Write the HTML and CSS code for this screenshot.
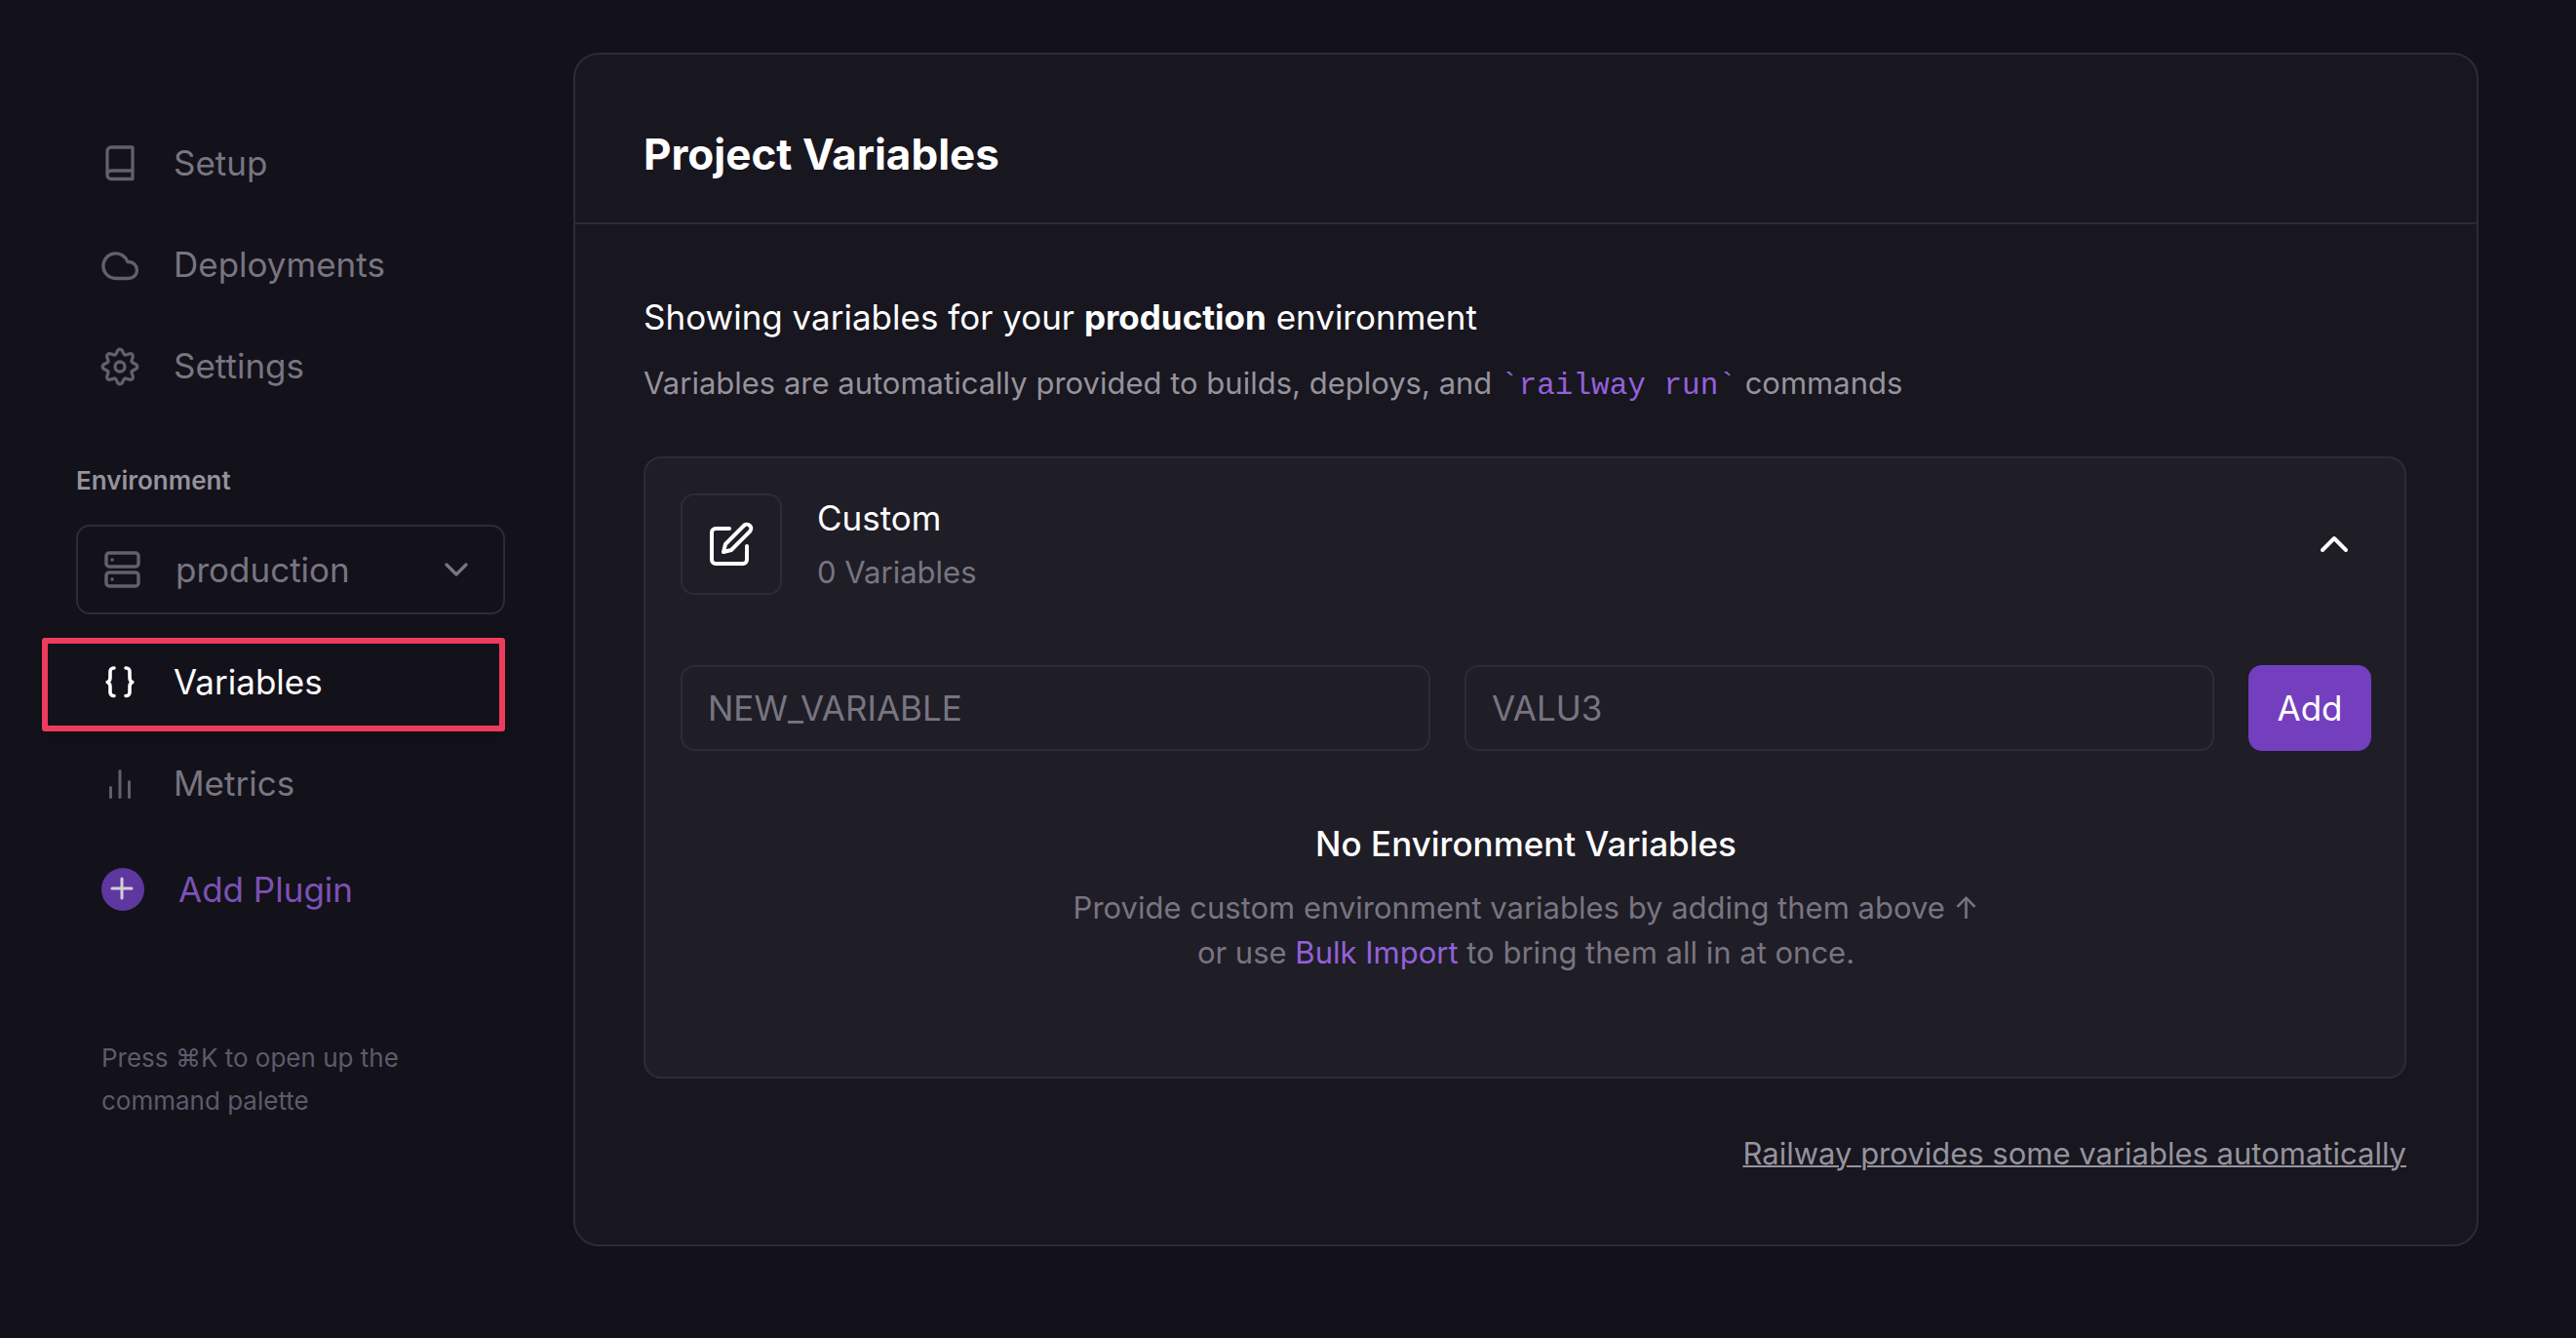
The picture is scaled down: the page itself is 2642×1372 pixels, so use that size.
FILE: index.html
```html
<!DOCTYPE html>
<html lang="en">
<head>
<meta charset="utf-8">
<meta name="viewport" content="width=device-width, initial-scale=1">
<title>Project Variables</title>
<link rel="stylesheet" href="styles.css">
</head>
<body>
<div class="layout">
  <aside class="sidebar">
    <nav class="nav">
      <a class="nav-item" href="#setup">
        <svg class="nav-icon" viewBox="0 0 38 40" stroke-width="3.300" aria-hidden="true"><path d="M32 4H10a4 4 0 0 0-4 4v24.500a4 4 0 0 0 4 4h22zM32 28H10a4 4 0 0 0-4 4"/></svg>
        Setup
      </a>
      <a class="nav-item" href="#deployments">
        <svg class="nav-icon" viewBox="0 0 38 40" stroke-width="3.300" aria-hidden="true"><path d="M28 17.500h-1.200A12.800 12.800 0 1 0 14.500 34.500H28a8.500 8.500 0 0 0 0-17z"/></svg>
        Deployments
      </a>
      <a class="nav-item" href="#settings">
        <svg class="nav-icon" viewBox="0 0 38 40" stroke-width="3.300" aria-hidden="true">
          <defs><path id="tooth" d="M-5.050-12.200C-2.500-13.300-3.600-17.800 0-17.800S2.500-13.300 5.050-12.200"/></defs>
          <g transform="translate(19 21)">
            <use href="#tooth"/><use href="#tooth" transform="rotate(45)"/><use href="#tooth" transform="rotate(90)"/><use href="#tooth" transform="rotate(135)"/><use href="#tooth" transform="rotate(180)"/><use href="#tooth" transform="rotate(225)"/><use href="#tooth" transform="rotate(270)"/><use href="#tooth" transform="rotate(315)"/>
            <circle r="5"/>
          </g>
        </svg>
        Settings
      </a>
    </nav>

    <label class="env-label" for="environment">Environment</label>
    <div class="env-select">
      <svg class="env-icon" viewBox="0 0 38 40" stroke-width="3.500" aria-hidden="true"><rect x="3" y="3" width="33" height="14" rx="3"/><rect x="3" y="23" width="33" height="14" rx="3"/><path d="M9 10h.1M9 30h.1"/></svg>
      <select id="environment"><option>production</option></select>
      <svg class="env-chevron" viewBox="0 0 24 16" stroke-width="3.300" aria-hidden="true"><path d="M2 3l10 10L22 3"/></svg>
    </div>

    <nav class="nav nav-env">
      <a class="nav-item active" href="#variables" aria-current="page">
        <svg class="nav-icon" viewBox="0 0 38 40" stroke-width="3.600" aria-hidden="true"><path d="M13 6h-.5a3.500 3.500 0 0 0-3.500 3.500v6c0 2-1 4.500-2.800 5 1.800.5 2.800 2.500 2.800 4.500V31a3.500 3.500 0 0 0 3.500 3.500H13M25 6h.5a3.500 3.500 0 0 1 3.500 3.500v6c0 2 1 4.500 2.800 5-1.800.5-2.800 2.500-2.800 4.500V31a3.500 3.500 0 0 1-3.500 3.500H25"/></svg>
        Variables
      </a>
      <a class="nav-item" href="#metrics">
        <svg class="nav-icon" viewBox="0 0 38 40" stroke-width="3" aria-hidden="true"><path d="M9.500 24.500v10M19 7.500v27M28.500 18.500v16"/></svg>
        Metrics
      </a>
    </nav>
    <a class="nav-item add-plugin" href="#add-plugin">
      <svg class="plus-icon" viewBox="0 0 44 44" stroke-width="3" aria-hidden="true"><circle cx="22" cy="22" r="22"/><path d="M21 11v20M11 21h20"/></svg>
      Add Plugin
    </a>
    <p class="hint">Press ⌘K to open up the command palette</p>
  </aside>

  <main class="card">
    <header class="card-header"><h1>Project Variables</h1></header>
    <div class="card-body">
      <h2 class="lead">Showing variables for your <strong>production</strong> environment</h2>
      <p class="sub">Variables are automatically provided to builds, deploys, and <code>`railway run`</code> commands</p>

      <section class="group">
        <div class="group-head">
          <div class="group-icon">
            <svg viewBox="0 0 24 24" stroke-width="2" aria-hidden="true"><path d="M11 4H4a2 2 0 0 0-2 2v14a2 2 0 0 0 2 2h14a2 2 0 0 0 2-2v-7"/><path d="M18.500 2.500a2.121 2.121 0 0 1 3 3L12 15l-4 1 1-4 9.500-9.500z"/></svg>
          </div>
          <div class="group-text">
            <h3>Custom</h3>
            <p>0 Variables</p>
          </div>
          <button class="collapse" type="button" aria-label="Collapse Custom">
            <svg viewBox="0 0 24 24" stroke-width="2" aria-hidden="true"><path d="M18 15l-6-6-6 6"/></svg>
          </button>
        </div>
        <form class="new-variable">
          <input type="text" placeholder="NEW_VARIABLE" aria-label="Variable name">
          <input type="text" placeholder="VALU3" aria-label="Variable value">
          <button class="add" type="button">Add</button>
        </form>
        <div class="empty">
          <h3>No Environment Variables</h3>
          <p>Provide custom environment variables by adding them above ↑<br>or use <a href="#bulk-import">Bulk Import</a> to bring them all in at once.</p>
        </div>
      </section>

      <a class="docs-link" href="#docs">Railway provides some variables automatically</a>
    </div>
  </main>
</div>
</body>
</html>
```
FILE: styles.css
```css
:root {
  --bg: #13111a;
  --card: #18161f;
  --group: #1f1d26;
  --line: #2d2b35;
  --text: #ffffff;
  --text-soft: #95939d;
  --text-muted: #787581;
  --text-dim: #5d5b69;
  --purple: #9461dc;
  --purple-fill: #733fbf;
}

* { box-sizing: border-box; }

body {
  margin: 0;
  min-height: 100vh;
  background: var(--bg);
  color: var(--text);
  font-family: Inter, "Liberation Sans", "DejaVu Sans", sans-serif;
  font-size: 35px;
  line-height: 48px;
}

h1, h2, h3, p { margin: 0; font-weight: 400; font-size: inherit; }
a { color: inherit; text-decoration: none; }
svg { display: block; flex: none; fill: none; stroke: currentColor; stroke-linecap: round; stroke-linejoin: round; }
button, input, select { font: inherit; color: inherit; }

.layout {
  display: grid;
  grid-template-columns: 440px minmax(0, 1fr);
  gap: 70px;
  align-items: start;
  padding: 54px 100px 54px 78px;
}

/* Sidebar */
.sidebar { padding-top: 61px; }

.nav-item {
  position: relative;
  display: flex;
  align-items: center;
  gap: 36px;
  height: 104px;
  padding-left: 26px;
  color: var(--text-muted);
}
.nav-icon { width: 38px; height: 40px; overflow: visible; color: #62606e; }

.env-label {
  display: block;
  margin-top: 46px;
  font-size: 26px;
  font-weight: 600;
  line-height: 40px;
  color: var(--text-soft);
}
.env-select {
  display: flex;
  align-items: center;
  height: 92px;
  margin-top: 25px;
  padding: 0 36px 0 26px;
  border: 2px solid var(--line);
  border-radius: 14px;
  color: var(--text-muted);
}
.env-icon { width: 38px; height: 40px; color: #62606e; }
.env-select select {
  flex: 1;
  min-width: 0;
  height: 88px;
  padding: 0 0 0 36px;
  border: 0;
  background: transparent;
  appearance: none;
}
.env-chevron { width: 24px; height: 16px; }

.nav-env { margin-top: 17px; }
.active, .active .nav-icon { color: var(--text); }
.active::after {
  content: "";
  position: absolute;
  inset: 7px 0 1px -35px;
  border: 6px solid #ef3c5d;
  border-radius: 3px;
  box-shadow: 0 4px 12px rgba(16, 16, 18, .5);
}

.add-plugin { gap: 35px; margin-top: 5px; color: #7c51b5; }
.plus-icon { width: 44px; height: 44px; stroke: #d2d0d4; }
.plus-icon circle { fill: #5f37a0; stroke: none; }

.hint {
  margin-top: 99px;
  padding: 0 26px;
  font-size: 26px;
  line-height: 44px;
  color: var(--text-dim);
}

/* Card */
.card {
  background: var(--card);
  border: 2px solid var(--line);
  border-radius: 26px;
}
.card-header { padding: 74px 70px 42px; border-bottom: 2px solid var(--line); }
.card-header h1 { font-size: 44px; line-height: 56px; font-weight: 700; }
.card-body { display: flex; flex-direction: column; padding: 71px 72px 71px 70px; }

.lead strong { font-weight: 700; }
.sub { margin-top: 22px; font-size: 31px; line-height: 44px; color: var(--text-soft); }
.sub code { font-family: "Liberation Mono", monospace; font-size: 31px; line-height: 1; color: var(--purple); }

.group {
  margin-top: 53px;
  padding: 36px 34px 104px 36px;
  background: var(--group);
  border: 2px solid var(--line);
  border-radius: 18px;
}
.group-head { display: flex; align-items: center; gap: 36px; }
.group-icon {
  display: grid;
  place-items: center;
  width: 104px;
  height: 104px;
  border: 2px solid var(--line);
  border-radius: 14px;
}
.group-icon svg, .collapse svg { width: 48px; height: 48px; }
.group-text { flex: 1; }
.group-text p { margin-top: 10px; font-size: 31px; line-height: 44px; color: var(--text-muted); }
.collapse { padding: 0 14px; border: 0; background: none; }

.new-variable { display: flex; gap: 35px; margin-top: 72px; }
.new-variable input {
  flex: 1;
  min-width: 0;
  height: 88px;
  padding: 0 26px;
  border: 2px solid var(--line);
  border-radius: 14px;
  background: transparent;
}
.new-variable input::placeholder { color: var(--text-muted); opacity: 1; }
.add {
  min-width: 126px;
  height: 88px;
  padding: 0 28px;
  border: 0;
  border-radius: 14px;
  background: var(--purple-fill);
}

.empty { margin-top: 71px; text-align: center; }
.empty h3 { font-weight: 500; }
.empty p { margin-top: 19px; font-size: 31px; line-height: 46px; color: var(--text-muted); }
.empty a { color: var(--purple); }

.docs-link {
  align-self: flex-end;
  margin-top: 55px;
  font-size: 31px;
  line-height: 44px;
  color: var(--text-soft);
  text-decoration: underline;
  text-decoration-thickness: 2px;
}
```
